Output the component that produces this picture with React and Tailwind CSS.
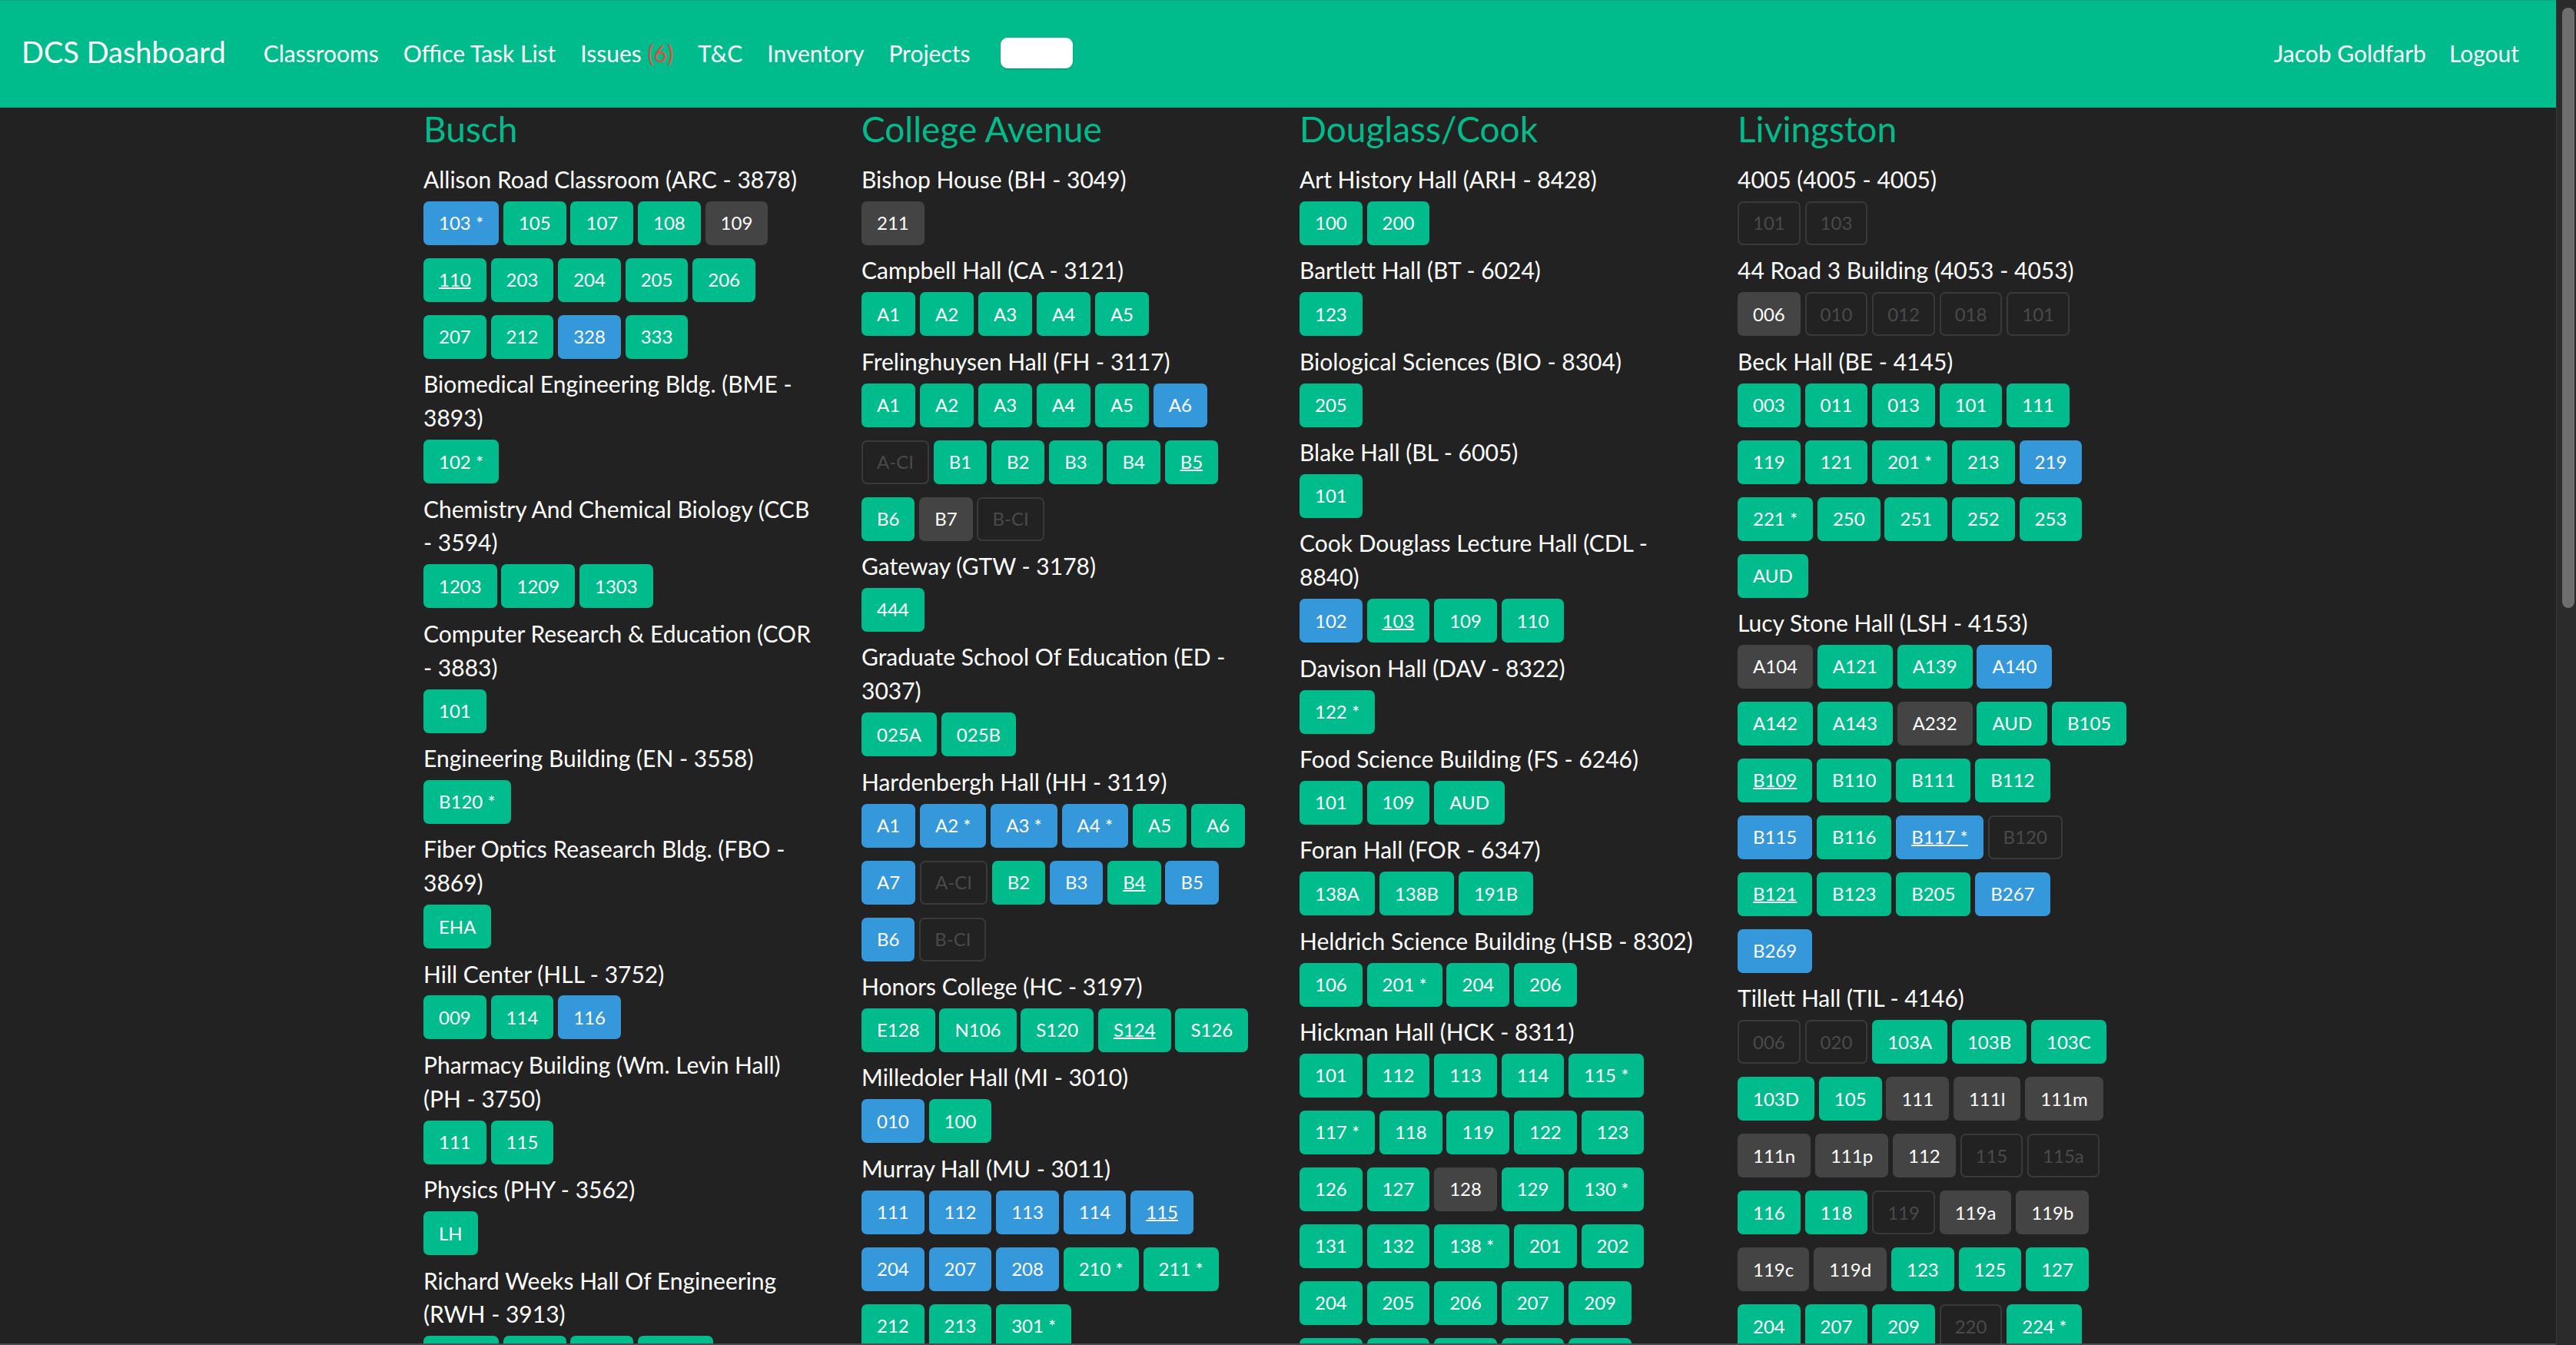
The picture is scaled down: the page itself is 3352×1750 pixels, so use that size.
import React from "react";

const columns = [
  {
    title: "Busch",
    buildings: [
      ["Allison Road Classroom (ARC - 3878)", ["103 *:b,105,107,108,109:d", "110:u,203,204,205,206", "207,212,328:b,333"]],
      ["Biomedical Engineering Bldg. (BME -|3893)", ["102 *"]],
      ["Chemistry And Chemical Biology (CCB|- 3594)", ["1203,1209,1303"]],
      ["Computer Research & Education (COR|- 3883)", ["101"]],
      ["Engineering Building (EN - 3558)", ["B120 *"]],
      ["Fiber Optics Reasearch Bldg. (FBO -|3869)", ["EHA"]],
      ["Hill Center (HLL - 3752)", ["009,114,116:b"]],
      ["Pharmacy Building (Wm. Levin Hall)|(PH - 3750)", ["111,115"]],
      ["Physics (PHY - 3562)", ["LH"]],
      ["Richard Weeks Hall Of Engineering|(RWH - 3913)", ["101 *,102,103,104 *"]],
    ],
  },
  {
    title: "College Avenue",
    buildings: [
      ["Bishop House (BH - 3049)", ["211:d"]],
      ["Campbell Hall (CA - 3121)", ["A1,A2,A3,A4,A5"]],
      ["Frelinghuysen Hall (FH - 3117)", ["A1,A2,A3,A4,A5,A6:b", "A-CI:x,B1,B2,B3,B4,B5:u", "B6,B7:d,B-CI:x"]],
      ["Gateway (GTW - 3178)", ["444"]],
      ["Graduate School Of Education (ED -|3037)", ["025A,025B"]],
      ["Hardenbergh Hall (HH - 3119)", ["A1:b,A2 *:b,A3 *:b,A4 *:b,A5,A6", "A7:b,A-CI:x,B2,B3:b,B4:u,B5:b", "B6:b,B-CI:x"]],
      ["Honors College (HC - 3197)", ["E128,N106,S120,S124:u,S126"]],
      ["Milledoler Hall (MI - 3010)", ["010:b,100"]],
      ["Murray Hall (MU - 3011)", ["111:b,112:b,113:b,114:b,115:bu", "204:b,207:b,208:b,210 *,211 *", "212,213,301 *"]],
    ],
  },
  {
    title: "Douglass/Cook",
    buildings: [
      ["Art History Hall (ARH - 8428)", ["100,200"]],
      ["Bartlett Hall (BT - 6024)", ["123"]],
      ["Biological Sciences (BIO - 8304)", ["205"]],
      ["Blake Hall (BL - 6005)", ["101"]],
      ["Cook Douglass Lecture Hall (CDL -|8840)", ["102:b,103:u,109,110"]],
      ["Davison Hall (DAV - 8322)", ["122 *"]],
      ["Food Science Building (FS - 6246)", ["101,109,AUD"]],
      ["Foran Hall (FOR - 6347)", ["138A,138B,191B"]],
      ["Heldrich Science Building (HSB - 8302)", ["106,201 *,204,206"]],
      ["Hickman Hall (HCK - 8311)", ["101,112,113,114,115 *", "117 *,118,119,122,123", "126,127,128:d,129,130 *", "131,132,138 *,201,202", "204,205,206,207,209", "210,211,212,213,214"]],
    ],
  },
  {
    title: "Livingston",
    buildings: [
      ["4005 (4005 - 4005)", ["101:x,103:x"]],
      ["44 Road 3 Building (4053 - 4053)", ["006:d,010:x,012:x,018:x,101:x"]],
      ["Beck Hall (BE - 4145)", ["003,011,013,101,111", "119,121,201 *,213,219:b", "221 *,250,251,252,253", "AUD"]],
      ["Lucy Stone Hall (LSH - 4153)", ["A104:d,A121,A139,A140:b", "A142,A143,A232:d,AUD,B105", "B109:u,B110,B111,B112", "B115:b,B116,B117 *:bu,B120:x", "B121:u,B123,B205,B267:b", "B269:b"]],
      ["Tillett Hall (TIL - 4146)", ["006:x,020:x,103A,103B,103C", "103D,105,111:d,111l:d,111m:d", "111n:d,111p:d,112:d,115:x,115a:x", "116,118,119:x,119a:d,119b:d", "119c:d,119d:d,123,125,127", "204,207,209,220:x,224 *"]],
    ],
  },
];

function parse(token) {
  const [label, mod = ""] = token.split(":");
  let kind = "g";
  if (mod.includes("b")) kind = "b";
  if (mod.includes("d")) kind = "d";
  if (mod.includes("x")) kind = "x";
  return { label, kind, u: mod.includes("u") };
}

function RoomButton({ label, kind, u }) {
  let cls = "bg-[#00bc8c] border-[#00bc8c] text-white";
  if (kind === "b") cls = "bg-[#3498db] border-[#3498db] text-white";
  if (kind === "d") cls = "bg-[#444444] border-[#444444] text-white";
  if (kind === "x") cls = "bg-transparent border-[#3a3a3a] text-[#4a4a4a]";
  return (
    <span
      className={`inline-flex items-center justify-center h-[57px] px-[18px] border-2 rounded-[7px] text-[24px] leading-none whitespace-nowrap ${cls} ${u ? "underline decoration-2" : ""}`}
    >
      {label}
    </span>
  );
}

function Building({ name, rows }) {
  const lines = name.split("|");
  return (
    <div className="pb-[9.5px]">
      <div className="pt-[2px] text-[30px] leading-[42.86px] text-white flex flex-col gap-[1px]">
        {lines.map((l, i) => (
          <div key={i} className="whitespace-nowrap">
            {l}
          </div>
        ))}
      </div>
      <div className="mt-[7px] flex flex-col gap-[17px]">
        {rows.map((r, i) => (
          <div key={i} className="flex gap-[5.8px]">
            {r.split(",").map((t, j) => (
              <RoomButton key={j} {...parse(t)} />
            ))}
          </div>
        ))}
      </div>
    </div>
  );
}

export default function App() {
  return (
    <div className="w-[3352px] h-[1750px] overflow-hidden flex bg-[#222222] font-['Lato','Liberation_Sans',sans-serif]">
      <div className="w-[3326px] h-full flex flex-col overflow-hidden">
        <nav className="h-[140px] shrink-0 bg-[#00bc8c] border-t border-[#14a37f] pb-[4px] flex items-center text-white">
          <div className="ml-[28px] text-[38px] leading-[46px] mb-[4px] whitespace-nowrap">DCS Dashboard</div>
          <div className="ml-[49px] flex items-center gap-[32px] text-[30px] leading-[42px] whitespace-nowrap">
            <span>Classrooms</span>
            <span>Office Task List</span>
            <span>
              Issues <span className="text-[#e74c3c]">(6)</span>
            </span>
            <span>T&amp;C</span>
            <span>Inventory</span>
            <span>Projects</span>
          </div>
          <div className="ml-[39px] w-[94px] h-[40px] rounded-[9px] bg-white shadow-[0_1px_2px_rgba(0,0,0,0.25)]" />
          <div className="ml-auto mr-[48px] flex items-center gap-[30px] text-[30px] leading-[42px] whitespace-nowrap">
            <span>Jacob Goldfarb</span>
            <span>Logout</span>
          </div>
        </nav>
        <div className="flex-1 overflow-hidden">
          <div className="ml-[491px] w-[2340px] px-[30px] grid grid-cols-4">
            {columns.map((col) => (
              <div key={col.title} className="px-[30px]">
                <h3 className="text-[46px] leading-[56px] mb-[14px] text-[#00bc8c]">{col.title}</h3>
                {col.buildings.map(([name, rows]) => (
                  <Building key={name} name={name} rows={rows} />
                ))}
              </div>
            ))}
          </div>
        </div>
        <div className="h-[2px] shrink-0 bg-[#4d4d4d]" />
      </div>
      <div className="w-[26px] h-full bg-[#2b2b2b] border-l border-[#3a3a3a] pt-[10px] pl-[7px] pb-[2px]">
        <div className="w-[16px] h-[781px] rounded-full bg-[#6e6e6e]" />
      </div>
    </div>
  );
}
